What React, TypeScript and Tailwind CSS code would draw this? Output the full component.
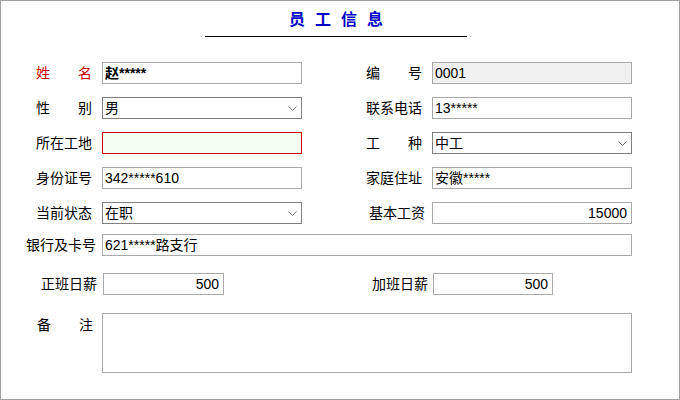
const font = 'font-["Liberation_Sans","Noto_Sans_CJK_SC",sans-serif]';

function Chevron() {
  return (
    <svg width="9" height="5" viewBox="0 0 9 5" className="shrink-0">
      <path d="M0.5 0.5 L4.5 4.5 L8.5 0.5" fill="none" stroke="#777" strokeWidth="1" />
    </svg>
  );
}

function Label({ text, width, pr, red, spread }: { text: string; width: string; pr: string; red?: boolean; spread?: boolean }) {
  const color = red ? 'text-[#d00000]' : 'text-black';
  return (
    <div className={`${width} ${pr} flex shrink-0 justify-end text-[14px] leading-[20px] ${color}`}>
      {spread ? (
        <div className="flex w-[56px] justify-between">
          <span>{text[0]}</span>
          <span>{text[1]}</span>
        </div>
      ) : (
        <span>{text}</span>
      )}
    </div>
  );
}

function Box({ value, width, align = 'left', bold, tone = 'plain', select }: { value?: string; width: string; align?: 'left' | 'right'; bold?: boolean; tone?: 'plain' | 'disabled' | 'error'; select?: boolean }) {
  const toneClass =
    tone === 'disabled'
      ? 'border-[#a9a9a9] bg-[#f0f0f0]'
      : tone === 'error'
        ? 'border-[#c80000] bg-[#f0fff0]'
        : select
          ? 'border-[#7f7f7f] bg-white'
          : 'border-[#a9a9a9] bg-white';
  return (
    <div className={`${width} flex h-[22px] shrink-0 items-center border ${toneClass} pl-[2px] pr-[4px] text-[14px] leading-[20px] text-black`}>
      <span className={`flex-1 whitespace-nowrap ${align === 'right' ? 'text-right' : ''} ${bold ? 'font-bold' : ''}`}>{value}</span>
      {select ? <Chevron /> : null}
    </div>
  );
}

export default function App() {
  return (
    <div className={`${font} h-[400px] w-[680px] border border-[#a0a0a0] bg-white`}>
      <div className="ml-[204px] w-[262px] pt-[9px]">
        <div className="pl-[10px] text-center text-[16px] font-bold leading-[20px] tracking-[10px] text-[#0000c8]">员工信息</div>
        <div className="mt-[6px] h-px bg-black" />
      </div>

      <div className="mt-[25px] flex flex-col gap-[13px]">
        <div className="flex items-center">
          <Label text="姓名" spread red width="w-[101px]" pr="pr-[10px]" />
          <Box value="赵*****" bold width="w-[200px]" />
          <Label text="编号" spread width="w-[130px]" pr="pr-[10px]" />
          <Box value="0001" tone="disabled" width="w-[200px]" />
        </div>
        <div className="flex items-center">
          <Label text="性别" spread width="w-[101px]" pr="pr-[10px]" />
          <Box value="男" select width="w-[200px]" />
          <Label text="联系电话" width="w-[130px]" pr="pr-[10px]" />
          <Box value="13*****" width="w-[200px]" />
        </div>
        <div className="flex items-center">
          <Label text="所在工地" width="w-[101px]" pr="pr-[10px]" />
          <Box tone="error" width="w-[200px]" />
          <Label text="工种" spread width="w-[130px]" pr="pr-[10px]" />
          <Box value="中工" select width="w-[200px]" />
        </div>
        <div className="flex items-center">
          <Label text="身份证号" width="w-[101px]" pr="pr-[10px]" />
          <Box value="342*****610" width="w-[200px]" />
          <Label text="家庭住址" width="w-[130px]" pr="pr-[10px]" />
          <Box value="安徽*****" width="w-[200px]" />
        </div>
        <div className="flex items-center">
          <Label text="当前状态" width="w-[101px]" pr="pr-[10px]" />
          <Box value="在职" select width="w-[200px]" />
          <Label text="基本工资" width="w-[130px]" pr="pr-[7px]" />
          <Box value="15000" align="right" width="w-[200px]" />
        </div>
      </div>

      <div className="mt-[10px] flex items-center">
        <Label text="银行及卡号" width="w-[101px]" pr="pr-[6px]" />
        <Box value="621*****路支行" width="w-[530px]" />
      </div>

      <div className="mt-[17px] flex items-center">
        <Label text="正班日薪" width="w-[102px]" pr="pr-[6px]" />
        <Box value="500" align="right" width="w-[121px]" />
        <Label text="加班日薪" width="w-[209px]" pr="pr-[5px]" />
        <Box value="500" align="right" width="w-[120px]" />
      </div>

      <div className="mt-[18px] flex items-start">
        <div className="w-[101px] shrink-0 pt-[2px] pr-[9px]">
          <div className="ml-auto flex w-[56px] justify-between text-[14px] leading-[20px] text-black">
            <span>备</span>
            <span>注</span>
          </div>
        </div>
        <div className="h-[60px] w-[530px] shrink-0 border border-[#a9a9a9] bg-white" />
      </div>
    </div>
  );
}
